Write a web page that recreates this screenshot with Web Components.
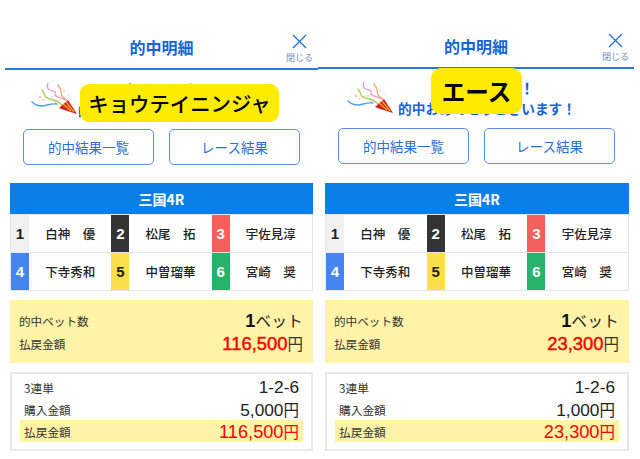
<!DOCTYPE html>
<html lang="ja"><head><meta charset="utf-8"><title>的中明細</title>
<style>html,body{margin:0;padding:0;background:#fff;overflow:hidden}body{font-family:"Noto Sans CJK JP","Noto Sans",sans-serif}</style>
</head><body>
<hit-app>
  <hit-panel tag="キョウテイニンジャ" tagtype="a" payout="116,500" stake="5,000"></hit-panel>
  <hit-panel tag="エース" tagtype="b" payout="23,300" stake="1,000"></hit-panel>
</hit-app>
<script>
const popper=`<svg width="47" height="33" viewBox="0 0 47 33" fill="none" aria-hidden="true">
<path d="M1 19c3 3 6 4 10 4s9-3 15-2" stroke="#4f9fee" stroke-width="1.4" stroke-linecap="round"/>
<path d="M11 7c1 2 3 4 3 6s5 3 9 4 6 3 8 5" stroke="#b5cf5f" stroke-width="1.5" stroke-linecap="round"/>
<path d="M17 0c-1 3-1 6 2 7s6 1 5 4 6 3 10 6" stroke="#ee9ac4" stroke-width="1.3" stroke-linecap="round"/>
<path d="M27 2c1 3 3 3 3 6s0 5 3 7l3 2" stroke="#f4a27a" stroke-width="1.3" stroke-linecap="round"/>
<g><circle cx="9" cy="14" r=".9" fill="#e89ab0"/><circle cx="24" cy="19" r=".8" fill="#e89ab0"/><circle cx="21" cy="14" r=".7" fill="#7fc6e8"/><circle cx="12" cy="17" r=".8" fill="#f2b27a"/><circle cx="33" cy="8" r=".8" fill="#8fc7e0"/><circle cx="37" cy="12" r=".7" fill="#c3d47a"/><circle cx="5" cy="11" r=".6" fill="#c3d47a"/></g>
<path d="M28 25 37 17 46 31Z" fill="#d3201b"/>
<path d="M32 21 40 28M35 19 43 29" stroke="#f0a62e" stroke-width="1.4"/>
<path d="M28 25 33 27 46 31Z" fill="#8f1414"/>
</svg>`;
function def(name,css,html){customElements.define(name,class extends HTMLElement{constructor(){super();this.attachShadow({mode:"open"}).innerHTML=`<style>${css}</style>`+(typeof html==="function"?html(this):html)}})}

def("hit-app",":host{display:flex;width:640px;height:459px;overflow:hidden;color:#333}","<slot></slot>");

def("hit-head",`:host{display:flex;box-sizing:border-box;height:50px;padding-top:6px;align-items:center;justify-content:center;position:relative;border-bottom:2px solid #2f76e2;color:#1565d8;font-weight:700;font-size:16px}
.close{position:absolute;right:5px;top:14px;display:flex;flex-direction:column;align-items:center;color:#6f8fbf;font-size:9px;font-weight:400;line-height:11px;white-space:nowrap}
svg{display:block;margin-bottom:3px}`,
`<slot></slot><span class="close"><svg width="15" height="15" viewBox="0 0 15 15"><path d="M1 1 14 14M14 1 1 14" stroke="#1f6fdc" stroke-width="1.3"/></svg>閉じる</span>`);

def("hit-greet",`:host{display:flex;height:59px;box-sizing:border-box;padding-top:var(--g-t);position:relative;flex-direction:column;align-items:center;color:#1565d8;font-weight:700;line-height:20px;white-space:nowrap}
.pop{position:absolute;left:var(--pop-x);top:var(--pop-y)}
.a{font-size:15px;transform:translateX(10.5px)}.b{font-size:13.7px;transform:translateX(8px)}`,
()=>`<span class="pop">${popper}</span><div class="a">おめでとう！</div><div class="b">的中おめでとうございます！</div><slot></slot>`);

def("hit-tag",`:host{position:absolute;left:var(--tag-x);top:var(--tag-y);width:var(--tag-w);height:var(--tag-h);display:flex;align-items:center;justify-content:center;background:#ffeb00;border-radius:var(--tag-r);color:#000;font-size:var(--tag-f);font-weight:var(--tag-wt);white-space:nowrap}`,"<slot></slot>");

def("hit-btns",`:host{display:flex;gap:15px;margin-left:var(--btn-x);height:36px}`,"<slot></slot>");
def("hit-btn",`:host{display:flex;box-sizing:border-box;width:131px;height:36px;align-items:center;justify-content:center;border:1px solid #5b8fe6;border-radius:5px;color:#2a70d8;font-size:13.5px;background:#fff}`,"<slot></slot>");

def("race-card",`:host{display:block;margin-top:var(--card-t);margin-left:var(--c-x);width:var(--c-w)}
.h{height:31px;background:#0a7fe8;color:#fff;font-weight:700;font-size:14px;display:flex;align-items:center;justify-content:center}
.g{display:grid;grid-template-columns:1fr 1fr 1fr;grid-auto-rows:38px;border:1px solid #e6e6e6;box-sizing:border-box;height:77px}`,
`<div class="h"><slot name="title"></slot></div><div class="g"><slot></slot></div>`);

def("racer-cell",`:host{display:flex;box-sizing:border-box;border-bottom:1px solid #e6e6e6;min-width:0;height:38px}
:host(:nth-last-child(-n+3)){border-bottom:0;height:37px}
.n{width:18px;flex:none;display:flex;align-items:center;justify-content:center;font-weight:700;font-size:15px;font-family:"Liberation Sans",sans-serif;background:var(--bg);color:var(--fg)}
.m{flex:1;display:flex;align-items:center;justify-content:center;font-size:12.5px;font-weight:500;color:#222;white-space:pre}`,
el=>`<span class="n" style="--bg:${el.getAttribute("bg")};--fg:${el.getAttribute("fg")}">${el.getAttribute("n")}</span><span class="m"><slot></slot></span>`);

def("sum-box",`:host{display:block;margin-top:9px;margin-left:var(--c-x);width:var(--c-w);height:63px;box-sizing:border-box;background:#fff3a8;padding:9px 10px 0 9px;font-size:11.6px;color:#333}
.r{display:flex;justify-content:space-between;align-items:center;height:23px}
.big{font-size:15.5px;letter-spacing:.3px;color:#222}
b{font-family:"Liberation Sans",sans-serif;font-weight:700;font-size:18px;color:#111}
.red{font-size:18.4px;font-weight:400;-webkit-text-stroke:.45px #f00;font-family:"Liberation Sans",sans-serif;color:#f00}
.yen{font-size:15.5px;color:#333}`,
el=>`<div class="r"><span>的中ベット数</span><span class="big"><b>1</b>ベット</span></div>
<div class="r"><span>払戻金額</span><span><span class="red">${el.getAttribute("payout")}</span><span class="yen">円</span></span></div>`);

def("det-box",`:host{display:block;margin-top:9px;margin-left:var(--c-x);width:var(--c-w);height:79px;box-sizing:border-box;border:2px solid #e8e8e8;padding:2px 8px 0 8px;font-size:11.7px;color:#333}
.r{display:flex;justify-content:space-between;align-items:center;height:22px;padding:0 4px 0 4px}
.v{font-size:17.3px;font-family:"Liberation Sans",sans-serif;color:#222}
.y{background:#fff3a8}.red{color:#f00;font-size:18.2px}
.yen{font-size:15.5px;font-family:"Noto Sans CJK JP",sans-serif}`,
el=>`<div class="r"><span>3連単</span><span class="v">1-2-6</span></div>
<div class="r"><span>購入金額</span><span class="v">${el.getAttribute("stake")}<span class="yen">円</span></span></div>
<div class="r y"><span>払戻金額</span><span class="v red">${el.getAttribute("payout")}<span class="yen">円</span></span></div>`);

const racers=[["1","白神　優","#f1f1f1","#222"],["2","松尾　拓","#333","#fff"],["3","宇佐見淳","#f4605c","#fff"],["4","下寺秀和","#4485ee","#fff"],["5","中曽瑠華","#fbe04a","#222"],["6","宮崎　奨","#27b36b","#fff"]];
customElements.define("hit-panel",class extends HTMLElement{constructor(){super();this.attachShadow({mode:"open"})}
connectedCallback(){const a=this.getAttribute("tagtype")==="a",t=this.getAttribute("tag"),p=this.getAttribute("payout"),s=this.getAttribute("stake");
const vars=a?`--g-t:10px;--pop-x:31px;--pop-y:13px;--tag-x:80px;--tag-y:14px;--tag-w:199px;--tag-h:38px;--tag-r:9px;--tag-f:20.4px;--tag-wt:500;--btn-x:23px;--c-x:10px;--c-w:303px;--hl:5px;--hr:0px;--ht:20px;--card-t:18px`
:`--g-t:9px;--pop-x:29px;--pop-y:13px;--tag-x:113px;--tag-y:-1px;--tag-w:91px;--tag-h:46px;--tag-r:10px;--tag-f:23.5px;--tag-wt:700;--btn-x:20px;--c-x:7px;--c-w:304px;--hl:0px;--hr:6px;--ht:19px;--card-t:19px`;
this.shadowRoot.innerHTML=`<style>:host{display:block;flex:none;width:${a?318:322}px;${vars}}
hit-head{margin-left:var(--hl);margin-right:var(--hr);margin-top:var(--ht)}</style>
<hit-head>的中明細</hit-head>
<hit-greet><hit-tag>${t}</hit-tag></hit-greet>
<hit-btns><hit-btn>的中結果一覧</hit-btn><hit-btn>レース結果</hit-btn></hit-btns>
<race-card><span slot="title">三国4R</span>${racers.map(r=>`<racer-cell n="${r[0]}" bg="${r[2]}" fg="${r[3]}">${r[1]}</racer-cell>`).join("")}</race-card>
<sum-box payout="${p}"></sum-box><det-box payout="${p}" stake="${s}"></det-box>`}});
</script>
</body></html>
